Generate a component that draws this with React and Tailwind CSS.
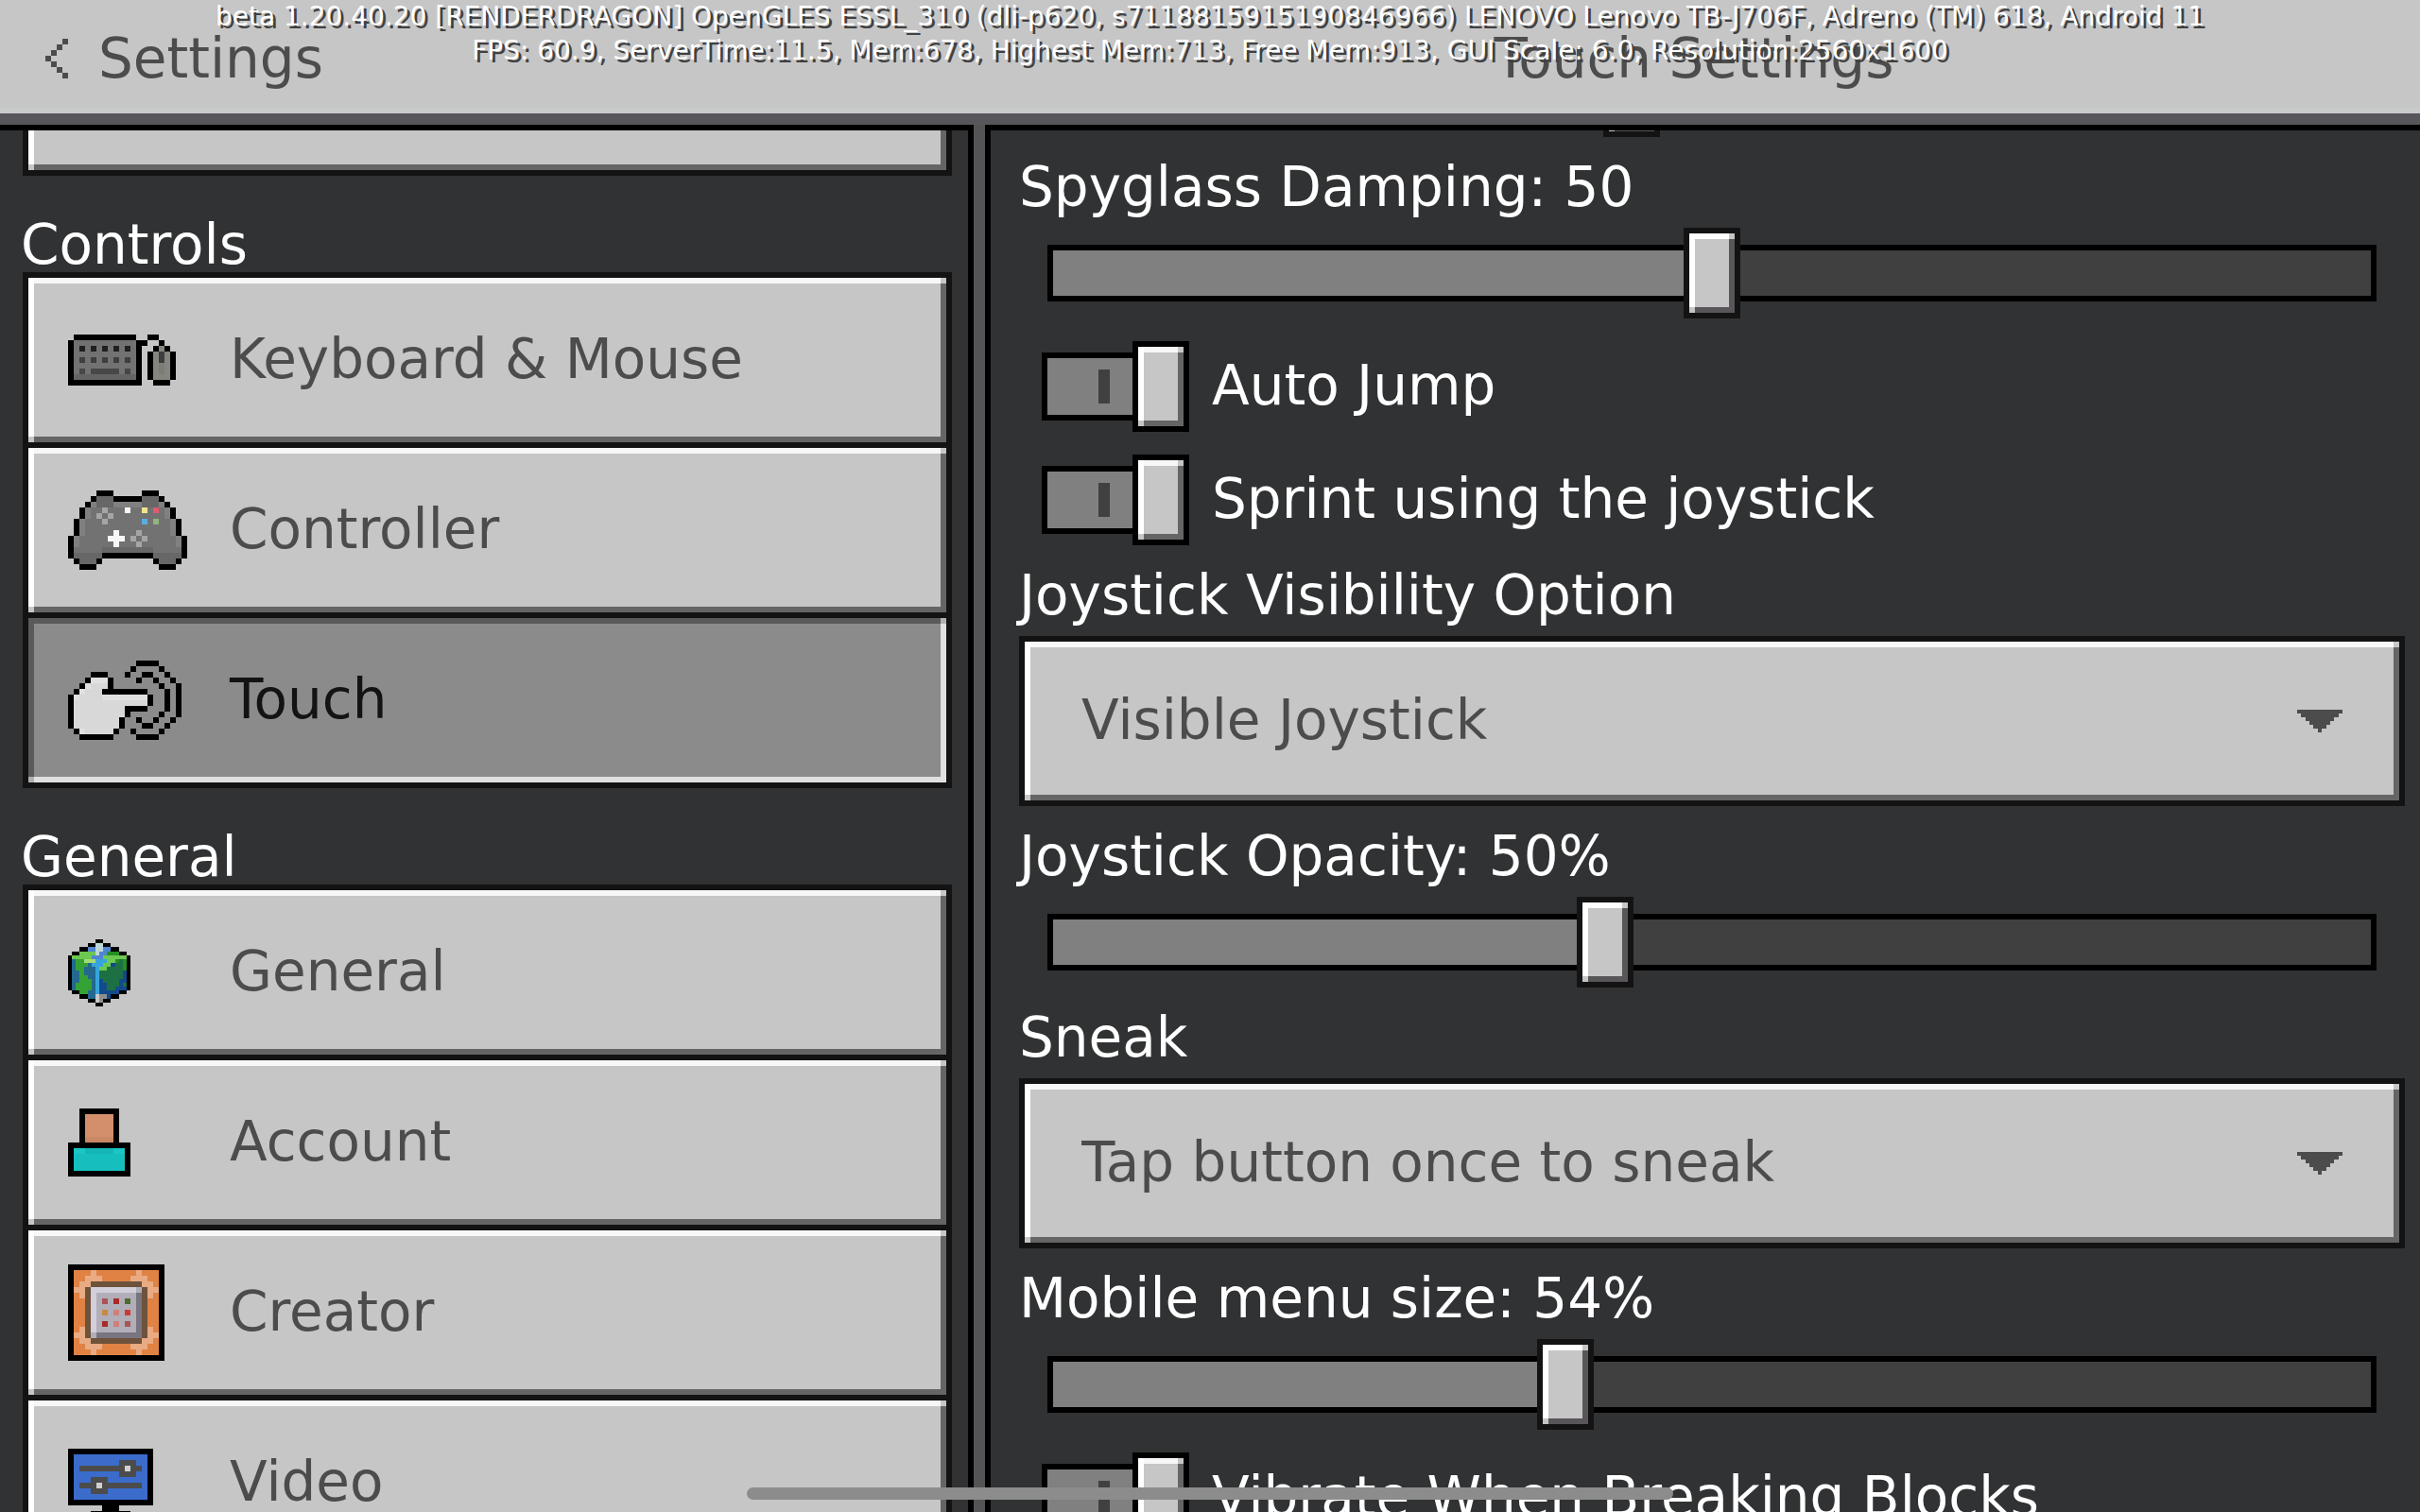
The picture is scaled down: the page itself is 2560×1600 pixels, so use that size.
import React, { useState } from 'react';

const COLORS = {
    keyboard: { k: '#000000', g: '#727272', a: '#202020', b: '#3e3e3e', c: '#474747', d: '#646464', m: '#858580', n: '#7d7d78' },
    controller: { k: '#000000', g: '#727272', d: '#676767', l: '#808083', p: '#a5a5a8', w: '#f7f7f7', y: '#f2e68c', r: '#e05a70', b: '#5aade0', e: '#92b380' },
    touch: { k: '#000000', w: '#d8d8d8', h: '#e1e1e1' },
    globe: { k: '#000000', p: '#bcd6da', b: '#4f86cf', l: '#6cc850', g: '#35a235', a: '#a3dc74', s: '#36a5dc', t: '#24678f', d: '#1c7043', n: '#124a8c', f: '#239023', w: '#c8c8c8', x: '#8f8f8f' },
    account: { k: '#000000', s: '#d38f6c', d: '#c98865', l: '#1bc6c4', t: '#16bfbd', m: '#14b5b4' },
    creator: { k: '#000000', o: '#df8244', l: '#e8ab83', b: '#6d523c', v: '#d2cfdb', m: '#b1aeb8', d: '#787580', r: '#a82a2a', q: '#a95555', g: '#4b6c2c', y: '#c58b3f', p: '#cf7f7b', e: '#cd3a33' },
    video: { k: '#000000', b: '#3b6ccc', g: '#4c4c4c', w: '#d0d0d0' },
    back: { k: '#4c4c4c' },
};

const SPRITES = {
    keyboard: [
        '.kkkkkkkkkkk..kk...',
        'kgggggggggggkk..k..',
        'kgagagagagagk..kmk.',
        'kgggggggggggk.kmbmk',
        'kgbgbgbgbgbgk.kmbmk',
        'kgggggggggggk.kmnmk',
        'kgcgcccccgcgk.kmnmk',
        'kdddddddddddk.kmmmk',
        'kkkkkkkkkkkkk..kkk.',
    ],
    controller: [
        '.....kkk.....kkk.....',
        '....kdddkkkkkdddk....',
        '...kldddllllldddlk...',
        '..klggpgggwggygrglk..',
        '..klgpgpggggggggglk..',
        '.klgggpggggggbgegglk.',
        '.klggggggggggggggglk.',
        '.klgggggwgggpggggglk.',
        'klgggggwwwgpgpggggglk',
        'klggggggwgggpgggggglk',
        'kgggggdddddddddgggggk',
        'kdddddkkkkkkkkkdddddk',
        '.kdddk.........kdddk.',
        '..kkk...........kkk..',
    ],
    touch: [
        '............kkkk....',
        '...........k....k...',
        '....kkk...k..kk..k..',
        '...khhhk....k..k..k.',
        '..khwwwk........k..k',
        '.khwwwkkkkkkkk...k.k',
        'khwwwwhhhhhhhhk..k.k',
        'kwwwwwwwwwwwwwk..k.k',
        'kwwwwwwwwwkkkk...k.k',
        'kwwwwwwwwwk.....k..k',
        'kwwwwwwwwk..k..k..k.',
        'kwwwwwwwwk...kk..k..',
        '.khwwwwwk..k....k...',
        '..kkkkkk....kkkk....',
    ],
    globe: [
        '.......kk.......',
        '.....kkppkk.....',
        '...kkbbppbbkk...',
        '.kkllllpbbfffkk.',
        'klllllbbbllllllk',
        'ktggaaasssllfdfk',
        'ktgggtsssllnddfk',
        'ktggtttsllddddfk',
        'kttgtttsddddddnk',
        'kttggttsddddddnk',
        'kttgggtsnddddnnk',
        'ktggggtsnndddndk',
        'ktggggtsnnddnnnk',
        '.kkggttsnnnnnkk.',
        '...kkttwxxnkk...',
        '.....kkwxkk.....',
        '.......kk.......',
    ],
    account: [
        '..kkkkkkk..',
        '..ksssssk..',
        '..ksssssk..',
        '..ksssssk..',
        '..ksssssk..',
        '..kdddddk..',
        'kkkkkkkkkkk',
        'kllmmmmmllk',
        'ktttttttttk',
        'ktttttttttk',
        'ktttttttttk',
        'kkkkkkkkkkk',
    ],
    creator: [
        'kkkkkkkkkkkkkkkkk',
        'koooloooooooloook',
        'koolllooooolllook',
        'kollbbbbbbbbbllok',
        'kllbvvvvvvvvmbllk',
        'kolbvmmmmmmmdblok',
        'koobvmqmrmgmdbook',
        'koobvmmmmmmmdbook',
        'koobvmympmemdbook',
        'koobvmmmmmmmdbook',
        'koobvmrmpmqmdbook',
        'kolbvmmmmmmmdblok',
        'kllbmddddddddbllk',
        'kollbbbbbbbbbllok',
        'koolllooooolllook',
        'koooloooooooloook',
        'kkkkkkkkkkkkkkkkk',
    ],
    video: [
        'kkkkkkkkkkkkkkk',
        'kbbbbbbbbbbbbbk',
        'kbbbbbbbbgggbbk',
        'kbggggggggwggbk',
        'kbbbbbbbbgggbbk',
        'kbbbgggbbbbbbbk',
        'kbgggwgggggggbk',
        'kbbbgggbbbbbbbk',
        'kbbbbbbbbbbbbbk',
        'kkkkkkkkkkkkkkk',
        '......kkk......',
        '....kkkkkkk....',
    ],
    back: ['...k', '..k.', '.k..', 'k...', '.k..', '..k.', '...k'],
};

const Sprite = ({ name, width, height }) => {
    const rows = SPRITES[name];
    const cols = rows[0].length;
    return (
        <svg
            width={width || cols * 6}
            height={height || rows.length * 6}
            viewBox={`0 0 ${cols} ${rows.length}`}
            preserveAspectRatio="none"
            shapeRendering="crispEdges"
            aria-hidden="true"
        >
            {rows.map((row, y) =>
                row.split('').map((c, x) =>
                    c === '.' ? null : <rect key={`${x}-${y}`} x={x} y={y} width="1" height="1" fill={COLORS[name][c]} />
                )
            )}
        </svg>
    );
};

// light top-left edge, dark bottom-right edge, neutral corners
const RAISED =
    '[background:linear-gradient(#c6c6c6,#c6c6c6)_left_bottom/6px_6px_no-repeat,linear-gradient(#c6c6c6,#c6c6c6)_right_top/6px_6px_no-repeat,linear-gradient(#fff,#fff)_left/6px_100%_no-repeat,linear-gradient(#f7f7f7,#f7f7f7)_top/100%_6px_no-repeat,linear-gradient(#656565,#656565)_right/6px_100%_no-repeat,linear-gradient(#656565,#656565)_bottom/100%_6px_no-repeat,#c6c6c6]';
const PRESSED =
    '[background:linear-gradient(#b0b0b0,#b0b0b0)_left_bottom/6px_6px_no-repeat,linear-gradient(#b0b0b0,#b0b0b0)_right_top/6px_6px_no-repeat,linear-gradient(#5a5a5a,#5a5a5a)_left/6px_100%_no-repeat,linear-gradient(#5a5a5a,#5a5a5a)_top/100%_6px_no-repeat,linear-gradient(#e0e0e0,#e0e0e0)_right/6px_100%_no-repeat,linear-gradient(#e0e0e0,#e0e0e0)_bottom/100%_6px_no-repeat,#8b8b8b]';
const THUMB =
    '[&::-webkit-slider-thumb]:[background:linear-gradient(#c6c6c6,#c6c6c6)_left_bottom/6px_6px_no-repeat,linear-gradient(#c6c6c6,#c6c6c6)_right_top/6px_6px_no-repeat,linear-gradient(#fff,#fff)_left/6px_100%_no-repeat,linear-gradient(#fff,#fff)_top/100%_6px_no-repeat,linear-gradient(#585658,#585658)_right/6px_100%_no-repeat,linear-gradient(#585658,#585658)_bottom/100%_6px_no-repeat,#c6c6c6]';

const sections = [
    {
        title: 'Controls',
        items: [
            { icon: 'keyboard', label: 'Keyboard & Mouse' },
            { icon: 'controller', label: 'Controller' },
            { icon: 'touch', label: 'Touch' },
        ],
    },
    {
        title: 'General',
        items: [
            { icon: 'globe', label: 'General', width: 66, height: 71 },
            { icon: 'account', label: 'Account' },
            { icon: 'creator', label: 'Creator' },
            { icon: 'video', label: 'Video' },
        ],
    },
];

const NavButton = ({ item, active, onClick }) => (
    <button
        type="button"
        onClick={onClick}
        className={`flex items-center w-full h-[186px] -mb-1.5 shrink-0 border-6 border-[#131313] pl-[42px] text-left ${active ? PRESSED : RAISED}`}
    >
        <span className="w-[171px] shrink-0">
            <Sprite name={item.icon} width={item.width} height={item.height} />
        </span>
        <span className={`pb-0.5 ${active ? 'text-[#131313]' : 'text-[#4c4c4c]'}`}>{item.label}</span>
    </button>
);

const RangeInput = ({ position, onChange, ...rest }) => (
    <input
        type="range"
        min="0"
        max="100"
        step="any"
        value={position}
        onChange={(e) => onChange(Number(e.target.value))}
        style={{ '--fill': `${position}%` }}
        className={`block appearance-none bg-transparent grow h-24 shrink-0 [&::-webkit-slider-runnable-track]:h-[60px] [&::-webkit-slider-runnable-track]:bg-[linear-gradient(to_right,#808080_var(--fill),#404040_var(--fill))] [&::-webkit-slider-runnable-track]:shadow-[inset_0_0_0_6px_#000] [&::-webkit-slider-thumb]:appearance-none [&::-webkit-slider-thumb]:w-[60px] [&::-webkit-slider-thumb]:h-24 [&::-webkit-slider-thumb]:-mt-[18px] [&::-webkit-slider-thumb]:border-6 [&::-webkit-slider-thumb]:border-solid [&::-webkit-slider-thumb]:border-[#131313] ${THUMB}`}
        {...rest}
    />
);

const Slider = ({ id, label, start }) => {
    const [position, setPosition] = useState(start);
    return (
        <div>
            <label htmlFor={id} className="block h-24 pt-2.5 leading-[86px]">{label}</label>
            <div className="flex mx-[30px]">
                <RangeInput id={id} position={position} onChange={setPosition} />
            </div>
        </div>
    );
};

const Toggle = ({ label }) => {
    const [on, setOn] = useState(true);
    return (
        <label className="flex items-center mt-6 ml-6 gap-6">
            <span className={`relative flex items-center w-[156px] h-24 shrink-0 ${on ? '' : 'flex-row-reverse'}`}>
                <input
                    type="checkbox"
                    checked={on}
                    onChange={(e) => setOn(e.target.checked)}
                    className="absolute inset-0 size-full appearance-none cursor-pointer"
                />
                <span className="flex items-center justify-end grow h-[72px] border-6 border-r-0 border-black bg-[#808080] pr-6">
                    <span className="w-3 h-9 bg-[#404040]" />
                </span>
                <span className={`w-[60px] h-24 border-6 border-black ${RAISED}`} />
            </span>
            <span className="pb-0.5">{label}</span>
        </label>
    );
};

const Dropdown = ({ id, label, options }) => (
    <div>
        <label htmlFor={id} className="block h-24 pt-2.5 leading-[86px]">{label}</label>
        <div className="relative">
            <select id={id} className={`block appearance-none w-full h-[180px] border-6 border-[#131313] pl-[60px] pb-0.5 text-[#4c4c4c] ${RAISED}`}>
                {options.map((option) => (
                    <option key={option}>{option}</option>
                ))}
            </select>
            <svg
                className="absolute inset-y-0 right-[66px] my-auto pointer-events-none"
                width="48"
                height="24"
                viewBox="0 0 48 24"
                fill="#4c4c4c"
                shapeRendering="crispEdges"
                aria-hidden="true"
            >
                <path d="M0 0h48v4h-4v4h-5v4h-4v4h-4v4h-5v4h-4v-4h-5v-4h-4v-4H9V8H4V4H0z" />
            </svg>
        </div>
    </div>
);

const App = () => {
    const [active, setActive] = useState('Touch');
    const [previous, setPrevious] = useState(43.7);

    return (
        <div className="relative flex flex-col h-screen overflow-hidden bg-[#313233] text-white text-[58px] leading-[68px] font-['DejaVu_Sans',sans-serif]">
            <header className="flex h-[132px] shrink-0 border-b-12 border-[#58565a] bg-[#c6c6c6] shadow-[inset_0_-6px_#c8cacb] text-[#4c4c4c] pt-7">
                <div className="w-[40%] shrink-0">
                    <button type="button" className="flex items-center ml-12 gap-8">
                        <Sprite name="back" />
                        Settings
                    </button>
                </div>
                <h1 className="grow text-center">Touch Settings</h1>
            </header>

            <main className="flex grow min-h-0">
                <nav className="w-[40%] shrink-0 border-t-6 border-black pl-6 pr-[17px] overflow-hidden">
                    <div className="flex items-end h-12 overflow-hidden">
                        <button type="button" aria-label="Accessibility" className={`w-full h-[186px] shrink-0 border-6 border-[#131313] ${RAISED}`} />
                    </div>
                    {sections.map((section) => (
                        <section key={section.title} className="pb-1.5 -mb-1.5 last:mt-1.5">
                            <h2 className="pt-11 leading-[58px] -ml-0.5">{section.title}</h2>
                            {section.items.map((item) => (
                                <NavButton
                                    key={item.label}
                                    item={item}
                                    active={active === item.label}
                                    onClick={() => setActive(item.label)}
                                />
                            ))}
                        </section>
                    ))}
                </nav>

                <div className="w-6 shrink-0 border-x-6 border-black bg-[#545456]" />

                <div className="grow border-t-6 border-black pl-[30px] pr-4 overflow-hidden">
                    <div className="flex items-end h-[7px] mx-[30px] overflow-hidden">
                        <RangeInput aria-label="Sensitivity" position={previous} onChange={setPrevious} />
                    </div>
                    <Slider id="damping" label="Spyglass Damping: 50" start={50} />
                    <Toggle label="Auto Jump" />
                    <Toggle label="Sprint using the joystick" />
                    <Dropdown id="visibility" label="Joystick Visibility Option" options={['Visible Joystick']} />
                    <Slider id="opacity" label="Joystick Opacity: 50%" start={41.6} />
                    <Dropdown id="sneak" label="Sneak" options={['Tap button once to sneak']} />
                    <Slider id="menu-size" label="Mobile menu size: 54%" start={38.5} />
                    <Toggle label="Vibrate When Breaking Blocks" />
                </div>
            </main>

            {/* debug readout over the header */}
            <div className="absolute inset-x-0 top-0 text-center text-[28px] leading-9 whitespace-nowrap pointer-events-none [text-shadow:3px_3px_0_#404040]">
                <p>beta 1.20.40.20 [RENDERDRAGON] OpenGLES ESSL_310 (dli-p620, s7118815915190846966) LENOVO Lenovo TB-J706F, Adreno (TM) 618, Android 11</p>
                <p>FPS: 60.9, ServerTime:11.5, Mem:678, Highest Mem:713, Free Mem:913, GUI Scale: 6.0, Resolution:2560x1600</p>
            </div>

            <div className="absolute inset-x-0 bottom-[13px] mx-auto w-[980px] h-[13px] rounded-full bg-[#8c8c8c] pointer-events-none" />
        </div>
    );
};

export default App;
